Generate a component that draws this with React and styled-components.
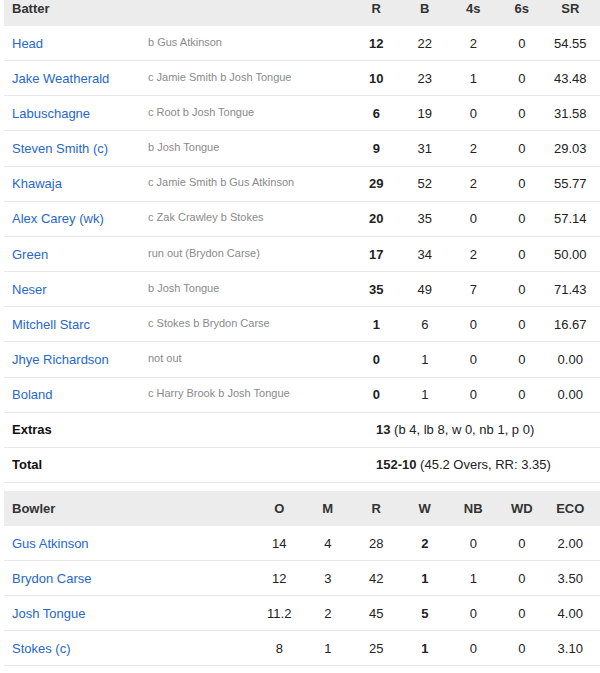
import React from "react";
import styled, { createGlobalStyle } from "styled-components";

const Global = createGlobalStyle`
  html, body { margin: 0; padding: 0; background: #fff; }
  body { font-family: "Liberation Sans", Arial, sans-serif; font-size: 13px; color: #222; overflow: hidden; }
`;

const Page = styled.div`
  padding-left: 4px;
  margin-top: -9px;
`;

const Table = styled.div`
  display: flex;
  flex-direction: column;
  margin-bottom: ${(p) => p.$gap || 0}px;
`;

const BAT_COLS = "136px 1fr repeat(5, 48.5px) 5.5px";
const BOWL_COLS = "1fr repeat(7, 48.5px) 5.5px";

const Row = styled.div`
  display: grid;
  grid-template-columns: ${(p) => p.$cols};
  height: ${(p) => (p.$tall ? "35.17px" : "35px")};
  box-sizing: border-box;
  align-items: center;
  background: ${(p) => (p.$head ? "#ececec" : "#fff")};
  border-bottom: ${(p) => (p.$head ? "none" : "1px solid #e8e8e8")};
`;

const HeadCell = styled.div`
  font-weight: bold;
  color: #333;
  text-align: ${(p) => (p.$left ? "left" : "center")};
  padding-left: ${(p) => (p.$left ? "8px" : "0")};
`;

const Name = styled.div`
  color: #2767c9;
  padding-left: 8px;
  white-space: nowrap;
`;

const Dismissal = styled.div`
  color: #8a8a8a;
  font-size: 11px;
  padding-left: 8px;
  padding-bottom: 3px;
  white-space: nowrap;
`;

const Num = styled.div`
  text-align: center;
  color: #222;
  font-weight: ${(p) => (p.$bold ? "bold" : "normal")};
`;

const Label = styled.div`
  font-weight: bold;
  color: #111;
  padding-left: 8px;
  grid-column: 1 / 3;
`;

const Summary = styled.div`
  grid-column: 3 / -1;
  padding-left: 24px;
  color: #222;
  white-space: nowrap;
  b { font-weight: bold; }
`;

const batters = [
  ["Head", "b Gus Atkinson", 12, 22, 2, 0, "54.55"],
  ["Jake Weatherald", "c Jamie Smith b Josh Tongue", 10, 23, 1, 0, "43.48"],
  ["Labuschagne", "c Root b Josh Tongue", 6, 19, 0, 0, "31.58"],
  ["Steven Smith (c)", "b Josh Tongue", 9, 31, 2, 0, "29.03"],
  ["Khawaja", "c Jamie Smith b Gus Atkinson", 29, 52, 2, 0, "55.77"],
  ["Alex Carey (wk)", "c Zak Crawley b Stokes", 20, 35, 0, 0, "57.14"],
  ["Green", "run out (Brydon Carse)", 17, 34, 2, 0, "50.00"],
  ["Neser", "b Josh Tongue", 35, 49, 7, 0, "71.43"],
  ["Mitchell Starc", "c Stokes b Brydon Carse", 1, 6, 0, 0, "16.67"],
  ["Jhye Richardson", "not out", 0, 1, 0, 0, "0.00"],
  ["Boland", "c Harry Brook b Josh Tongue", 0, 1, 0, 0, "0.00"],
];

const bowlers = [
  ["Gus Atkinson", "14", 4, 28, 2, 0, 0, "2.00"],
  ["Brydon Carse", "12", 3, 42, 1, 1, 0, "3.50"],
  ["Josh Tongue", "11.2", 2, 45, 5, 0, 0, "4.00"],
  ["Stokes (c)", "8", 1, 25, 1, 0, 0, "3.10"],
];

export default function App() {
  return (
    <Page>
      <Global />
      <Table $gap={8}>
        <Row $cols={BAT_COLS} $head>
          <HeadCell $left>Batter</HeadCell>
          <div />
          <HeadCell>R</HeadCell>
          <HeadCell>B</HeadCell>
          <HeadCell>4s</HeadCell>
          <HeadCell>6s</HeadCell>
          <HeadCell>SR</HeadCell>
        </Row>
        {batters.map((b) => (
          <Row $cols={BAT_COLS} $tall key={b[0]}>
            <Name>{b[0]}</Name>
            <Dismissal>{b[1]}</Dismissal>
            <Num $bold>{b[2]}</Num>
            <Num>{b[3]}</Num>
            <Num>{b[4]}</Num>
            <Num>{b[5]}</Num>
            <Num>{b[6]}</Num>
          </Row>
        ))}
        <Row $cols={BAT_COLS} $tall>
          <Label>Extras</Label>
          <Summary>
            <b>13</b> (b 4, lb 8, w 0, nb 1, p 0)
          </Summary>
        </Row>
        <Row $cols={BAT_COLS} $tall>
          <Label>Total</Label>
          <Summary>
            <b>152-10</b> (45.2 Overs, RR: 3.35)
          </Summary>
        </Row>
      </Table>
      <Table>
        <Row $cols={BOWL_COLS} $head>
          <HeadCell $left>Bowler</HeadCell>
          <HeadCell>O</HeadCell>
          <HeadCell>M</HeadCell>
          <HeadCell>R</HeadCell>
          <HeadCell>W</HeadCell>
          <HeadCell>NB</HeadCell>
          <HeadCell>WD</HeadCell>
          <HeadCell>ECO</HeadCell>
        </Row>
        {bowlers.map((b) => (
          <Row $cols={BOWL_COLS} key={b[0]}>
            <Name>{b[0]}</Name>
            <Num>{b[1]}</Num>
            <Num>{b[2]}</Num>
            <Num>{b[3]}</Num>
            <Num $bold>{b[4]}</Num>
            <Num>{b[5]}</Num>
            <Num>{b[6]}</Num>
            <Num>{b[7]}</Num>
          </Row>
        ))}
      </Table>
    </Page>
  );
}
